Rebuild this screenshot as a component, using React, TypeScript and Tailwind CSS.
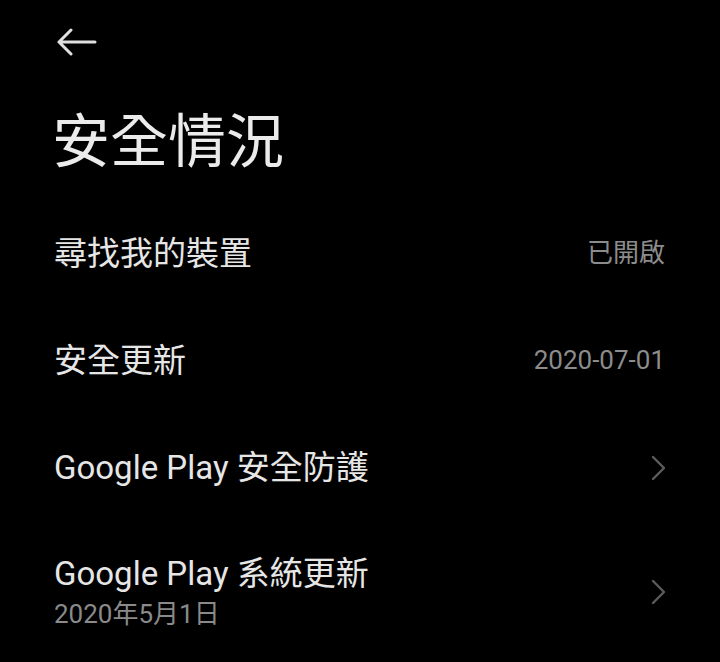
import React from 'react';

const font = { fontFamily: 'Roboto, "Noto Sans CJK TC", sans-serif' };

const Chevron: React.FC = () => (
  <svg width="16" height="26" viewBox="0 0 16 26" fill="none">
    <path d="M2 2 L13 13 L2 24" stroke="#5c5c5c" strokeWidth="2.4" strokeLinecap="round" strokeLinejoin="round" />
  </svg>
);

const Row: React.FC<{ title: string; sub?: string; value?: string; chevron?: boolean; tall?: boolean }> = ({ title, sub, value, chevron, tall }) => (
  <div className={`flex items-center justify-between pl-[54px] pr-[55px] ${tall ? 'h-[138px] pt-[4px]' : 'h-[107px]'}`}>
    <div className="flex flex-col">
      <span className="text-[33px] leading-[40px] text-[#e6e6e6]">{title}</span>
      {sub && <span className="text-[26px] leading-[32px] mt-[4px] text-[#8a8a8a]">{sub}</span>}
    </div>
    {value && <span className="text-[26px] text-[#8c8c8c]">{value}</span>}
    {chevron && <div className="-mr-[2px]"><Chevron /></div>}
  </div>
);

const App: React.FC = () => {
  return (
    <div className="w-[720px] h-[662px] bg-black overflow-hidden select-none" style={font}>
      {/* back arrow */}
      <div className="h-[84px] flex items-center pl-[56px]">
        <svg width="42" height="28" viewBox="0 0 42 28" fill="none">
          <path d="M3 14 H39 M15 2 L3 14 L15 26" stroke="#e0e0e0" strokeWidth="3" strokeLinecap="round" strokeLinejoin="round" />
        </svg>
      </div>

      {/* page title */}
      <div className="h-[116px] flex items-center pl-[52px]">
        <h1 className="text-[58px] leading-none text-[#ebebeb] font-normal">安全情況</h1>
      </div>

      <Row title="尋找我的裝置" value="已開啟" />
      <Row title="安全更新" value="2020-07-01" />
      <Row title="Google Play 安全防護" chevron />
      <Row title="Google Play 系統更新" sub="2020年5月1日" chevron tall />
    </div>
  );
};

export default App;
